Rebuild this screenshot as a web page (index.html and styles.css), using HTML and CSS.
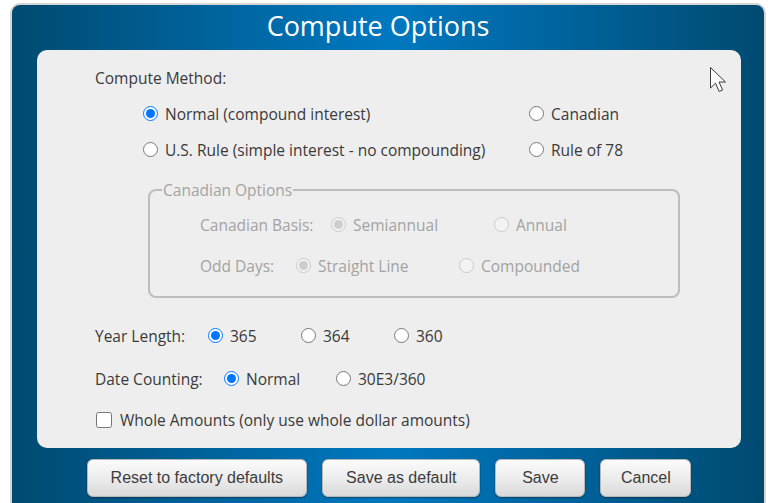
FILE: index.html
```html
<!DOCTYPE html>
<html lang="en">
<head>
<meta charset="utf-8">
<title>Compute Options</title>
<link rel="stylesheet" href="styles.css">
</head>
<body>
<div class="dialog">
  <h1 class="dialog-title">Compute Options</h1>
  <form class="panel">
    <div class="section-label">Compute Method:</div>
    <div class="method-grid">
      <label class="opt"><input type="radio" name="method" checked><span>Normal (compound interest)</span></label>
      <label class="opt"><input type="radio" name="method"><span>Canadian</span></label>
      <label class="opt"><input type="radio" name="method"><span>U.S. Rule (simple interest - no compounding)</span></label>
      <label class="opt"><input type="radio" name="method"><span>Rule of 78</span></label>
    </div>

    <fieldset class="canadian" disabled>
      <legend>Canadian Options</legend>
      <div class="row">
        <span class="row-label w-basis">Canadian Basis:</span>
        <label class="opt w-can"><input type="radio" name="basis" checked disabled><span>Semiannual</span></label>
        <label class="opt"><input type="radio" name="basis" disabled><span>Annual</span></label>
      </div>
      <div class="row row-odd">
        <span class="row-label w-odd">Odd Days:</span>
        <label class="opt w-can"><input type="radio" name="odd" checked disabled><span>Straight Line</span></label>
        <label class="opt"><input type="radio" name="odd" disabled><span>Compounded</span></label>
      </div>
    </fieldset>

    <div class="row row-year">
      <span class="row-label w-year">Year Length:</span>
      <label class="opt w-yr"><input type="radio" name="year" checked><span>365</span></label>
      <label class="opt w-yr"><input type="radio" name="year"><span>364</span></label>
      <label class="opt"><input type="radio" name="year"><span>360</span></label>
    </div>
    <div class="row row-date">
      <span class="row-label w-date">Date Counting:</span>
      <label class="opt w-dc"><input type="radio" name="dates" checked><span>Normal</span></label>
      <label class="opt"><input type="radio" name="dates"><span>30E3/360</span></label>
    </div>
    <div class="row row-whole">
      <label class="opt check"><input type="checkbox"><span>Whole Amounts (only use whole dollar amounts)</span></label>
    </div>
  </form>
  <div class="actions">
    <button type="button" class="btn">Reset to factory defaults</button>
    <button type="button" class="btn">Save as default</button>
    <button type="button" class="btn btn-short">Save</button>
    <button type="button" class="btn btn-short btn-cancel">Cancel</button>
  </div>
</div>

<svg class="pointer" width="20" height="28" viewBox="0 0 20 28" aria-hidden="true">
  <path d="M1.5 1.5 L1.5 22 L6.5 17.2 L10.2 25.5 L13.6 24 L10 16 L16.5 16 Z" fill="#ffffff" stroke="#3a3a3a" stroke-width="1" stroke-linejoin="miter"/>
</svg>
</body>
</html>
```

FILE: styles.css
```css
html, body {
  margin: 0;
  padding: 0;
  height: 100%;
  overflow: hidden;
  background: #ffffff;
}

body {
  font-family: "Open Sans", "Noto Sans", sans-serif;
  font-size: 15.5px;
  color: #3a3a3a;
}

.dialog {
  margin: 3px 4px 0 10px;
  border: 2px solid #d6d6d6;
  border-bottom: none;
  border-radius: 10px 10px 0 0;
  background: linear-gradient(to right, #004a70 0%, #00629a 25%, #0078c0 50%, #00629a 75%, #004a70 100%);
  padding: 0 23px 20px 25px;
}

.dialog-title {
  margin: 0 0 5px;
  padding-right: 22px;
  height: 40px;
  line-height: 41px;
  text-align: center;
  font-family: "Open Sans", "Noto Sans", sans-serif;
  font-weight: 400;
  font-size: 27px;
  color: #ffffff;
}

.panel {
  background: #eeeeee;
  border-radius: 10px;
  padding: 18px 0 18px 58px;
}

.section-label {
  line-height: 20px;
}

.method-grid {
  display: grid;
  grid-template-columns: 386px auto;
  row-gap: 16px;
  margin: 16px 0 0 48px;
}

.opt {
  display: inline-flex;
  align-items: baseline;
  gap: 7px;
  line-height: 20px;
  white-space: nowrap;
}

.opt input {
  margin: 0;
  width: 15px;
  height: 15px;
  flex: none;
  position: relative;
  top: 1px;
}

.row {
  display: flex;
  align-items: baseline;
  line-height: 20px;
}

.row-label {
  flex: none;
}

/* Canadian options group */
.canadian {
  margin: 20px 0 0 53px;
  width: 532px;
  box-sizing: border-box;
  border: 2px solid #bdbdbd;
  border-radius: 8px;
  padding: 15px 0 20px 12px;
  color: #a3a3a3;
}

.canadian legend {
  padding: 0 1px;
  line-height: 20px;
  color: #a3a3a3;
}

.canadian .row {
  margin-left: 38px;
}

.canadian .row-odd {
  margin-top: 21px;
}

.w-basis { width: 131px; }
.w-odd { width: 96px; }
.w-can { width: 163px; }
.w-year { width: 113px; }
.w-yr { width: 93px; }
.w-date { width: 129px; }
.w-dc { width: 112px; }

.row-year { margin-top: 28px; }
.row-date { margin-top: 23px; }
.row-whole { margin-top: 21px; }

.check {
  gap: 8px;
  margin-left: 1px;
}

.check input {
  width: 16px;
  height: 16px;
  top: 2px;
}

/* bottom action buttons */
.actions {
  display: flex;
  justify-content: center;
  gap: 15px;
  margin-top: 11px;
}

.btn {
  height: 38px;
  padding: 0 23px;
  font-family: "Liberation Sans", Arial, sans-serif;
  font-size: 16px;
  color: #3c3c3c;
  background: linear-gradient(to bottom, #fbfbfb 0%, #ededed 50%, #d9d9d9 100%);
  border: 1px solid #b8b8b8;
  border-radius: 6px;
  box-shadow: 0 1px 2px rgba(0, 0, 0, 0.35);
}

.btn-short {
  padding: 0;
  width: 90px;
}

.btn-cancel {
  width: 91px;
}

.pointer {
  position: absolute;
  left: 709px;
  top: 66px;
}
```
